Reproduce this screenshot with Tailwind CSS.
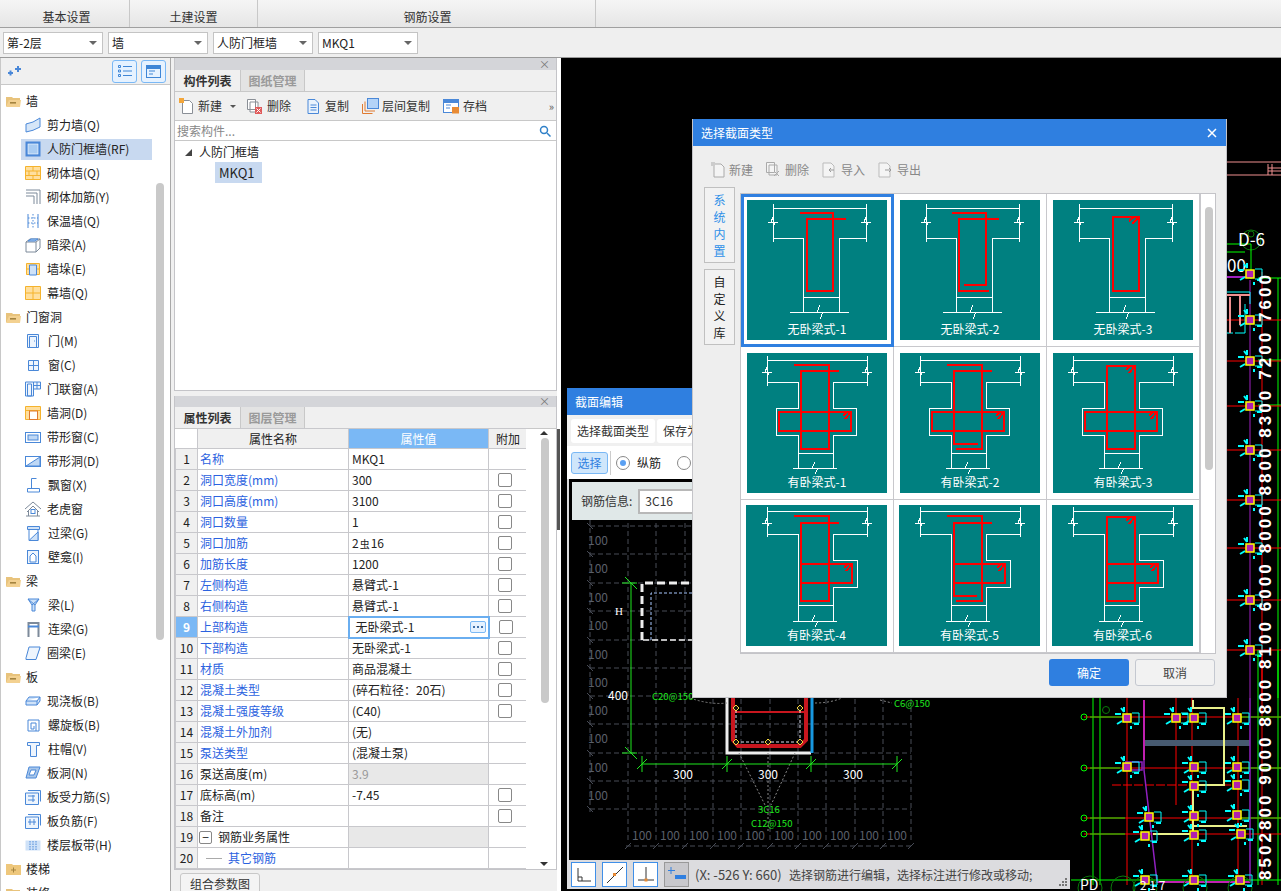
<!DOCTYPE html>
<html lang="zh-CN">
<head>
<meta charset="utf-8">
<title>截面编辑</title>
<script src="https://cdn.jsdelivr.net/npm/@tailwindcss/browser@4"></script>
</head>
<body class="w-[1281px] h-[891px] overflow-hidden bg-[#f0f0f0] text-[12px] leading-[16px] text-[#222] font-['Noto_Sans_CJK_SC',sans-serif]">

<svg width="0" height="0" class="absolute">
<defs>
<g id="ba"><path d="M26 4V42M119 4V42M26 8H119M26 38H56V112M119 38H92V112M56 97H92M43 112H102M21 22H31M26 17l-2 5h4l-2 5M114 22H124M119 17l-2 5h4l-2 5M73 105l-3 7h6l-3 7" fill="none" stroke="#fff"/></g>
<g id="a1"><use href="#ba"/><path d="M53 13H86V91H60V19H99" fill="none" stroke="#f00" stroke-width="2"/></g>
<g id="a2"><use href="#ba"/><path d="M52 13H86V85H64M99 19H59V91H89" fill="none" stroke="#f00" stroke-width="2"/></g>
<g id="a3"><use href="#ba"/><path d="M60 17H86V91H60ZM79 24l7-7M76 21l5-4" fill="none" stroke="#f00" stroke-width="2"/></g>
<g id="bb"><path d="M20 3V33M120 3V33M20 7H120M20 29H51V55H29V82H51V115M120 29H86V55H109V82H86V115M51 100H86M46 115H90M15 19H25M20 14l-2 5h4l-2 5M115 19H125M120 14l-2 5h4l-2 5M68 109l-3 6h6l-3 6" fill="none" stroke="#fff"/></g>
<g id="ring"><path d="M32 59H104V78H32ZM98 66l6-7M96 63l4-4" fill="none" stroke="#f00" stroke-width="2"/></g>
<g id="b1"><use href="#bb"/><use href="#ring"/><path d="M47 12H82V96H54V18H92" fill="none" stroke="#f00" stroke-width="2"/></g>
<g id="b2"><use href="#bb"/><use href="#ring"/><path d="M47 12H82V96H56M92 18H54V91H78" fill="none" stroke="#f00" stroke-width="2"/></g>
<g id="b3"><use href="#bb"/><use href="#ring"/><path d="M54 13H82V96H54ZM76 20l6-7M73 17l4-4" fill="none" stroke="#f00" stroke-width="2"/></g>
<g id="bc"><path d="M21 2V32M121 2V32M21 6H121M21 29H52V116M121 29H87V55H111V82H87V116M52 100H87M47 116H91M16 18H26M21 13l-2 5h4l-2 5M116 18H126M121 13l-2 5h4l-2 5M69 110l-3 6h6l-3 6" fill="none" stroke="#fff"/></g>
<g id="ring2"><path d="M55 59H106V78H55ZM100 66l6-7M98 63l4-4" fill="none" stroke="#f00" stroke-width="2"/></g>
<g id="c1"><use href="#bc"/><use href="#ring2"/><path d="M48 11H83V96H55V18H93" fill="none" stroke="#f00" stroke-width="2"/></g>
<g id="c2"><use href="#bc"/><use href="#ring2"/><path d="M48 11H83V96H57M93 18H55V91H78" fill="none" stroke="#f00" stroke-width="2"/></g>
<g id="c3"><use href="#bc"/><use href="#ring2"/><path d="M55 12H83V96H55ZM77 19l6-7M74 16l4-4" fill="none" stroke="#f00" stroke-width="2"/></g>
<g id="node"><path d="M-12-4h6M-6-10l3 4M-3-11v5M7 6h5M4 8v3M-10 6l5-3" stroke="#0ff" stroke-width="2" fill="none"/><rect x="-4" y="-4" width="8" height="8" fill="#b020b0" stroke="#ff0" stroke-width="1.500"/><path d="M5-5h7v10h-7" fill="none" stroke="#0ff"/></g>
<g id="fold"><path d="M0 2h6l1 1h7v2H4L1 11H0Z" fill="#e8c37c"/><path d="M3 5h12l-1 7H0Z" fill="#f3d191"/><rect x="4" y="7" width="6" height="1.600" fill="#a5843f"/></g>
</defs>
</svg>

<!-- top tabs -->
<div class="flex h-[28px] bg-gradient-to-b from-[#f5f5f5] to-[#e6e6e6] border-b border-[#a0a0a0]">
  <div class="w-[130px] pl-[4px] border-r border-[#c8c8c8] flex items-end justify-center pb-[2px] text-[#333]">基本设置</div>
  <div class="w-[128px] border-r border-[#c8c8c8] flex items-end justify-center pb-[2px] text-[#333]">土建设置</div>
  <div class="w-[338px] pl-[2px] border-r border-[#c8c8c8] flex items-end justify-center pb-[2px] text-[#333]">钢筋设置</div>
</div>

<!-- selector bar -->
<div class="flex h-[29px] items-center gap-[5px] pl-[3px] bg-[#efefef]">
  <div class="w-[100px] h-[22px] bg-white border border-[#c4c4c4] flex items-center justify-between pl-[3px] pr-[5px]"><span>第-2层</span><span class="w-0 h-0 border-x-[4px] border-x-transparent border-t-[4px] border-t-[#666]"></span></div>
  <div class="w-[100px] h-[22px] bg-white border border-[#c4c4c4] flex items-center justify-between pl-[3px] pr-[5px]"><span>墙</span><span class="w-0 h-0 border-x-[4px] border-x-transparent border-t-[4px] border-t-[#666]"></span></div>
  <div class="w-[100px] h-[22px] bg-white border border-[#c4c4c4] flex items-center justify-between pl-[3px] pr-[5px]"><span>人防门框墙</span><span class="w-0 h-0 border-x-[4px] border-x-transparent border-t-[4px] border-t-[#666]"></span></div>
  <div class="w-[100px] h-[22px] bg-white border border-[#c4c4c4] flex items-center justify-between pl-[3px] pr-[5px]"><span>MKQ1</span><span class="w-0 h-0 border-x-[4px] border-x-transparent border-t-[4px] border-t-[#666]"></span></div>
</div>

<div class="flex h-[834px] border-t border-[#9a9a9a]">

  <!-- left tree -->
  <div class="relative w-[171px] shrink-0 border-r border-[#a8a8a8] bg-white overflow-hidden border-l border-l-[#c8c8c8]">
    <div class="h-[27px] bg-[#f0f0f0] border-b border-[#c8c8c8] flex items-center pl-[6px]">
      <svg width="16" height="12" viewBox="0 0 16 12"><path d="M1 8h5M3.500 5.500v5M8 4h6M11 1v6" stroke="#4a88d8" stroke-width="2"/></svg>
      <div class="ml-auto flex gap-[4px] pr-[4px]">
        <div class="w-[25px] h-[23px] rounded-[3px] border border-[#7ab8f5] bg-[#e6f2ff] flex items-center justify-center"><svg width="16" height="14" viewBox="0 0 16 14" fill="none" stroke="#3f86d6"><path d="M1.500 1.500h2v2h-2zM1.500 6h2v2h-2zM1.500 10.500h2v2h-2zM6 2.500h9M6 7h9M6 11.500h9"/></svg></div>
        <div class="w-[25px] h-[23px] rounded-[3px] border border-[#7ab8f5] bg-[#e6f2ff] flex items-center justify-center"><svg width="17" height="15" viewBox="0 0 17 15" fill="none" stroke="#3f86d6"><rect x="1.500" y="1.500" width="14" height="12"/><rect x="1.500" y="1.500" width="14" height="3" fill="#3f86d6"/><path d="M4 7h6M4 10h4"/></svg></div>
      </div>
    </div>
    <div class="pt-[4px]">
      <div class="h-6 flex items-center pl-[5px] gap-[4px]"><svg width="16" height="13" viewBox="0 0 16 13"><use href="#fold"/></svg>墙</div>
      <div class="h-6 flex items-center pl-[24px] gap-[6px]"><svg width="16" height="16" viewBox="0 0 16 16" fill="#d6e6f8" stroke="#4a88d8"><path d="M1 7Q8 6 15 1V10Q8 14 1 15Z"/></svg>剪力墙(Q)</div>
      <div class="ml-[20px] w-[131px] h-[21px] my-[1.500px] pl-[4px] bg-[#c8d9f0] flex items-center gap-[6px]"><svg width="16" height="16" viewBox="0 0 16 16" fill="none"><rect x="0.500" y="0.500" width="15" height="15" fill="#4a88d8"/><rect x="3" y="3" width="10" height="10" fill="#a9ccf2" stroke="#fff" stroke-width=".6"/></svg>人防门框墙(RF)</div>
      <div class="h-6 flex items-center pl-[24px] gap-[6px]"><svg width="16" height="14" viewBox="0 0 16 14" fill="#ffdf9e" stroke="#f5b32d"><path d="M.500.500h15v13H.500zM.500 5h15M.500 9.500h15M8 .5V5M4 5v4.500M12 5v4.500M8 9.500v4"/></svg>砌体墙(Q)</div>
      <div class="h-6 flex items-center pl-[24px] gap-[6px]"><svg width="16" height="16" viewBox="0 0 16 16" fill="none" stroke="#7d8a9a"><path d="M1 1h14v14M1 4h11v11M1 7h8v8"/></svg>砌体加筋(Y)</div>
      <div class="h-6 flex items-center pl-[24px] gap-[6px]"><svg width="16" height="16" viewBox="0 0 16 16" fill="none" stroke="#4a88d8"><path d="M3 1v14M13 1v14" /><path d="M8 1v14M3 5h10M3 10h10" stroke-dasharray="1.500 1.500"/></svg>保温墙(Q)</div>
      <div class="h-6 flex items-center pl-[24px] gap-[6px]"><svg width="16" height="16" viewBox="0 0 16 16" fill="#fff" stroke="#7d8a9a"><path d="M1 5l4-3h10v9l-4 4H1zM1 5h10v10M11 5l4-3"/><path d="M3 4l3-2h7l-3 2z" fill="#a9ccf2" stroke="#4a88d8"/></svg>暗梁(A)</div>
      <div class="h-6 flex items-center pl-[24px] gap-[6px]"><svg width="16" height="14" viewBox="0 0 16 14" fill="#ffdf9e" stroke="#f5b32d"><path d="M1.500 1.500h13v11h-13zM1.500 7h13"/><path d="M4.500 3h7v10h-7z" fill="#cfe2f8" stroke="#4a88d8"/></svg>墙垛(E)</div>
      <div class="h-6 flex items-center pl-[24px] gap-[6px]"><svg width="16" height="14" viewBox="0 0 16 14" fill="#ffdf9e" stroke="#f5b32d"><path d="M.500.500h15v13H.500zM.500 7h15M8 .5v13"/></svg>幕墙(Q)</div>
      <div class="h-6 flex items-center pl-[5px] gap-[4px]"><svg width="16" height="13" viewBox="0 0 16 13"><use href="#fold"/></svg>门窗洞</div>
      <div class="h-6 flex items-center pl-[26px] gap-[8px]"><svg width="13" height="14" viewBox="0 0 13 14" fill="#eef5fd" stroke="#4a88d8"><path d="M.500.500h11v13H.500zM2.500 2.500h7v11h-7z"/><path d="M7 7h1"/></svg>门(M)</div>
      <div class="h-6 flex items-center pl-[26px] gap-[8px]"><svg width="13" height="13" viewBox="0 0 13 13" fill="#eef5fd" stroke="#4a88d8"><path d="M1.500 1.500h10v10h-10zM6.500 1.500v10M1.500 6.500h10"/></svg>窗(C)</div>
      <div class="h-6 flex items-center pl-[24px] gap-[6px]"><svg width="16" height="16" viewBox="0 0 16 16" fill="#eef5fd" stroke="#4a88d8"><path d="M.500 1h8v14h-8zM2.500 3h4v12h-4zM8.500 1h7v7h-7zM12 1v7M8.500 4.500h7"/></svg>门联窗(A)</div>
      <div class="h-6 flex items-center pl-[24px] gap-[6px]"><svg width="16" height="14" viewBox="0 0 16 14" fill="#ffdf9e" stroke="#f5b32d"><path d="M.500.500h15v13H.500zM.500 4.500h15"/><rect x="4.500" y="5" width="8" height="8.500" fill="#fff" stroke="#e07a30"/></svg>墙洞(D)</div>
      <div class="h-6 flex items-center pl-[24px] gap-[6px]"><svg width="16" height="11" viewBox="0 0 16 11" fill="#fff" stroke="#4a88d8"><rect x=".5" y=".5" width="15" height="10"/><rect x="3" y="3" width="10" height="5" fill="#bfd8f5"/></svg>带形窗(C)</div>
      <div class="h-6 flex items-center pl-[24px] gap-[6px]"><svg width="16" height="11" viewBox="0 0 16 11" fill="#fff" stroke="#4a88d8"><rect x=".5" y=".5" width="15" height="10"/><path d="M1 10L15 1v9z" fill="#bfd8f5"/></svg>带形洞(D)</div>
      <div class="h-6 flex items-center pl-[26px] gap-[8px]"><svg width="13" height="15" viewBox="0 0 13 15" fill="none" stroke="#4a88d8"><path d="M4.500.500V10M4.500.500h5M.500 10.500h12v3.500H.500z"/></svg>飘窗(X)</div>
      <div class="h-6 flex items-center pl-[24px] gap-[6px]"><svg width="16" height="16" viewBox="0 0 16 16" fill="none" stroke="#7d8a9a"><path d="M0 8l8-7 8 7M2 11l6-6 6 6M1 15h14M3.500 9v6M12.500 9v6"/><rect x="6" y="8.500" width="4" height="4" stroke="#4a88d8"/></svg>老虎窗</div>
      <div class="h-6 flex items-center pl-[26px] gap-[8px]"><svg width="13" height="15" viewBox="0 0 13 15" fill="#cfe2f8" stroke="#4a88d8"><path d="M.500.500h12v3H.500z"/><path d="M2 3.500v11h9V3.500" fill="none"/><path d="M2 14.500L11 6v8.500z"/></svg>过梁(G)</div>
      <div class="h-6 flex items-center pl-[26px] gap-[8px]"><svg width="13" height="14" viewBox="0 0 13 14" fill="#eef5fd" stroke="#4a88d8"><rect x=".5" y=".5" width="11" height="13"/><path d="M3 12V6l3-3 3 3v6z" fill="#fff"/></svg>壁龛(I)</div>
      <div class="h-6 flex items-center pl-[5px] gap-[4px]"><svg width="16" height="13" viewBox="0 0 16 13"><use href="#fold"/></svg>梁</div>
      <div class="h-6 flex items-center pl-[26px] gap-[8px]"><svg width="13" height="14" viewBox="0 0 13 14" fill="#cfe2f8" stroke="#4a88d8"><path d="M1 1h11L8 7v6H5V7z"/><path d="M1 1l7 6M12 1L5 7" fill="none"/></svg>梁(L)</div>
      <div class="h-6 flex items-center pl-[26px] gap-[8px]"><svg width="13" height="15" viewBox="0 0 13 15" fill="none" stroke="#7d8a9a" stroke-width="2"><path d="M1.500 15V1h10v14"/><path d="M1 4.500h11" stroke="#4a88d8"/></svg>连梁(G)</div>
      <div class="h-6 flex items-center pl-[24px] gap-[6px]"><svg width="16" height="14" viewBox="0 0 16 14" fill="#eef5fd" stroke="#4a88d8"><path d="M4 1h11l-4 11H1z"/><path d="M1 12v1.500h10l4-12"/></svg>圈梁(E)</div>
      <div class="h-6 flex items-center pl-[5px] gap-[4px]"><svg width="16" height="13" viewBox="0 0 16 13"><use href="#fold"/></svg>板</div>
      <div class="h-6 flex items-center pl-[24px] gap-[6px]"><svg width="16" height="10" viewBox="0 0 16 10" fill="#cfe2f8" stroke="#4a88d8"><path d="M4 1h11L12 5H1zM1 5v4h11l3-4V1M12 5v4"/></svg>现浇板(B)</div>
      <div class="h-6 flex items-center pl-[26px] gap-[8px]"><svg width="13" height="13" viewBox="0 0 13 13" fill="none" stroke="#4a88d8"><path d="M1 1h11v11H1zM9 12V4H4v6h3V7"/></svg>螺旋板(B)</div>
      <div class="h-6 flex items-center pl-[26px] gap-[8px]"><svg width="13" height="15" viewBox="0 0 13 15" fill="#eef5fd" stroke="#4a88d8"><path d="M.500.500h12v3H9.500v11h-6v-11H.500z"/></svg>柱帽(V)</div>
      <div class="h-6 flex items-center pl-[24px] gap-[6px]"><svg width="16" height="14" viewBox="0 0 16 14" fill="#a8c6ea" stroke="#4a88d8"><path d="M4 1h11l-4 11H1z"/><path d="M6 4h5L9 9H4z" fill="#fff"/></svg>板洞(N)</div>
      <div class="h-6 flex items-center pl-[24px] gap-[6px]"><svg width="16" height="15" viewBox="0 0 16 15" fill="#eef5fd" stroke="#4a88d8"><path d="M3 .5h12.500v11M.500 3h13v11.500H.500zM3 6h7M3 10h7M8 5v7"/></svg>板受力筋(S)</div>
      <div class="h-6 flex items-center pl-[24px] gap-[6px]"><svg width="16" height="15" viewBox="0 0 16 15" fill="#eef5fd" stroke="#4a88d8"><path d="M3 .5h12.500v11M.500 3h13v11.500H.500zM3 8h8M5 5v6M9 5v6"/></svg>板负筋(F)</div>
      <div class="h-6 flex items-center pl-[24px] gap-[6px]"><svg width="16" height="11" viewBox="0 0 16 11" fill="#cfe2f8" stroke="#4a88d8"><rect x=".5" y=".5" width="15" height="10" stroke="none"/><path d="M5 1v9M11 1v9M8 1v9" stroke-dasharray="1.500 1"/></svg>楼层板带(H)</div>
      <div class="h-6 flex items-center pl-[5px] gap-[4px]"><svg width="16" height="13" viewBox="0 0 16 13"><path d="M0 1h6l1 1h8v10H0z" fill="#eec77c"/><path d="M5 7h5M7.500 4.500v5" stroke="#a5843f"/></svg>楼梯</div>
      <div class="h-6 flex items-center pl-[5px] gap-[4px]"><svg width="16" height="13" viewBox="0 0 16 13"><use href="#fold"/></svg>装修</div>
    </div>
    <div class="absolute left-[155px] top-[125px] w-[8px] h-[457px] rounded-[4px] bg-[#c9c9c9]"></div>
  </div>

  <!-- middle panels -->
  <div class="w-[386px] shrink-0 pl-[3px] flex flex-col bg-[#f0f0f0]">
    <div class="h-[333px] border-x border-b border-[#c4c4c8] flex flex-col">
      <div class="h-[12px] bg-[#d4d5d9] flex items-center justify-end pr-[6px] text-[11px] leading-none text-[#777]">×</div>
      <div class="h-[22px] flex border-b border-[#c8c8c8]">
        <div class="w-[65px] flex items-center justify-center font-bold text-[#333]">构件列表</div>
        <div class="w-[65px] bg-[#e3e3e3] border-x border-[#c8c8c8] flex items-center justify-center font-bold text-[#9a9a9a]">图纸管理</div>
      </div>
      <div class="h-[29px] border-b border-[#c8c8c8] flex items-center pl-[4px] text-[#333] relative">
        <svg width="15" height="16" viewBox="0 0 15 16" fill="#fff" stroke="#8a8f96"><path d="M3.500 2.500h7l3 3v10h-10z"/><path d="M0 0h5v5H0z" fill="#f3a63a" stroke="none"/></svg>
        <span class="ml-[4px]">新建</span>
        <span class="ml-[8px] w-0 h-0 border-x-[3px] border-x-transparent border-t-[3px] border-t-[#555]"></span>
        <svg class="ml-[11px]" width="15" height="15" viewBox="0 0 15 15" fill="#fff" stroke="#8a8f96"><path d="M.500.500h8v10h-8zM3 3h8v10H3z"/><rect x="8" y="8" width="7" height="7" fill="#e05a5a" stroke="none"/><path d="M9.500 9.500l4 4M13.500 9.500l-4 4" stroke="#fff"/></svg>
        <span class="ml-[5px]">删除</span>
        <svg class="ml-[15px]" width="13" height="15" viewBox="0 0 13 15" fill="#e9f2fc" stroke="#4a88d8"><path d="M2 .5h7l3.500 3.500v10.500H2zM4.500 6h6M4.500 8.500h6M4.500 11h6"/></svg>
        <span class="ml-[6px]">复制</span>
        <svg class="ml-[13px]" width="17" height="16" viewBox="0 0 17 16" fill="none"><path d="M.500 6v9.500h10M3 3.500v9.500h10" stroke="#e07a30"/><rect x="5.500" y=".5" width="11" height="10" fill="#b4d3f7" stroke="#4a88d8"/></svg>
        <span class="ml-[3px]">层间复制</span>
        <svg class="ml-[13px]" width="17" height="15" viewBox="0 0 17 15" fill="#fff" stroke="#4a88d8"><rect x=".5" y=".5" width="15" height="13"/><rect x=".5" y=".5" width="15" height="3" fill="#4a88d8"/><path d="M3 6h5M3 9h4"/><rect x="9" y="8" width="7" height="6.500" fill="#e88b35" stroke="none"/></svg>
        <span class="ml-[3px]">存档</span>
        <span class="absolute right-[2px] text-[11px] text-[#555]">»</span>
      </div>
      <div class="h-[20px] bg-white border-b border-[#c8c8c8] flex items-center pl-[2px] pr-[5px] justify-between text-[#888]"><span>搜索构件...</span><svg width="12" height="12" viewBox="0 0 12 12" fill="none" stroke="#2f80c8" stroke-width="1.500"><circle cx="5" cy="5" r="3.500"/><path d="M8 8l3.500 3.500"/></svg></div>
      <div class="flex-1 bg-white pt-[1px]">
        <div class="h-[20px] flex items-center pl-[10px] gap-[7px] text-[#222]"><svg width="7" height="7" viewBox="0 0 7 7"><path d="M7 0v7H0z" fill="#444"/></svg>人防门框墙</div>
        <div class="ml-[40px] w-[47px] h-[21px] bg-[#c8d9f0] flex items-center pl-[4px] text-[13px]">MKQ1</div>
      </div>
    </div>

    <div class="h-[5px]"></div>

    <div class="relative flex-1 flex flex-col min-h-0">
      <div class="border-x border-[#c4c4c8] flex flex-col">
        <div class="h-[11px] bg-[#d4d5d9] flex items-center justify-end pr-[6px] text-[11px] leading-none text-[#777]">×</div>
        <div class="h-[22px] flex border-b border-[#c8c8c8]">
          <div class="w-[65px] flex items-center justify-center font-bold text-[#333]">属性列表</div>
          <div class="w-[65px] bg-[#e3e3e3] border-x border-[#c8c8c8] flex items-center justify-center font-bold text-[#9a9a9a]">图层管理</div>
        </div>
        <div class="relative bg-white border-b border-[#c4c4c8]">
          <table class="table-fixed border-collapse w-[352px] text-[12px] -mt-px">
            <colgroup><col class="w-[22px]"><col class="w-[151px]"><col class="w-[140px]"><col class="w-[39px]"></colgroup>
            <tbody class="[&_td]:border [&_td]:border-[#c8c8cc] [&_td]:h-[21px] [&_td]:py-0 [&_td]:leading-[16px]">
              <tr class="h-[20px]"><td class="!border-0 bg-white !h-[20px]"></td><td class="bg-[#f0f0f0] text-center !h-[20px]">属性名称</td><td class="bg-[#7ab8f5] text-white text-center !h-[20px]">属性值</td><td class="bg-[#f0f0f0] text-center !h-[20px]">附加</td></tr>
              <tr><td class="bg-[#f0f0f0] text-center">1</td><td class="pl-[2px] text-[#2b62e0]">名称</td><td class="pl-[3px]">MKQ1</td><td></td></tr>
              <tr><td class="bg-[#f0f0f0] text-center">2</td><td class="pl-[2px] text-[#2b62e0]">洞口宽度(mm)</td><td class="pl-[3px]">300</td><td><div class="ml-[9px] w-[14px] h-[14px] rounded-[2px] border border-[#888]"></div></td></tr>
              <tr><td class="bg-[#f0f0f0] text-center">3</td><td class="pl-[2px] text-[#2b62e0]">洞口高度(mm)</td><td class="pl-[3px]">3100</td><td><div class="ml-[9px] w-[14px] h-[14px] rounded-[2px] border border-[#888]"></div></td></tr>
              <tr><td class="bg-[#f0f0f0] text-center">4</td><td class="pl-[2px] text-[#2b62e0]">洞口数量</td><td class="pl-[3px]">1</td><td><div class="ml-[9px] w-[14px] h-[14px] rounded-[2px] border border-[#888]"></div></td></tr>
              <tr><td class="bg-[#f0f0f0] text-center">5</td><td class="pl-[2px] text-[#2b62e0]">洞口加筋</td><td class="pl-[3px]">2<span class="text-[10px] px-[1px]">⾍</span>16</td><td><div class="ml-[9px] w-[14px] h-[14px] rounded-[2px] border border-[#888]"></div></td></tr>
              <tr><td class="bg-[#f0f0f0] text-center">6</td><td class="pl-[2px] text-[#2b62e0]">加筋长度</td><td class="pl-[3px]">1200</td><td><div class="ml-[9px] w-[14px] h-[14px] rounded-[2px] border border-[#888]"></div></td></tr>
              <tr><td class="bg-[#f0f0f0] text-center">7</td><td class="pl-[2px] text-[#2b62e0]">左侧构造</td><td class="pl-[3px]">悬臂式-1</td><td><div class="ml-[9px] w-[14px] h-[14px] rounded-[2px] border border-[#888]"></div></td></tr>
              <tr><td class="bg-[#f0f0f0] text-center">8</td><td class="pl-[2px] text-[#2b62e0]">右侧构造</td><td class="pl-[3px]">悬臂式-1</td><td><div class="ml-[9px] w-[14px] h-[14px] rounded-[2px] border border-[#888]"></div></td></tr>
              <tr><td class="bg-[#7ab8f5] text-center text-white font-bold">9</td><td class="pl-[2px] text-[#2b62e0]">上部构造</td><td class="!border-2 !border-[#6aaef0] pl-[6px]"><div class="flex items-center justify-between pr-[2px]"><span>无卧梁式-1</span><span class="w-[16px] h-[12px] rounded-[2px] border border-[#7ab8f5] bg-[#e6f2ff] flex items-center justify-center"><svg width="10" height="2" viewBox="0 0 10 2" fill="#3f6fa8"><path d="M0 0h2v2H0zM4 0h2v2H4zM8 0h2v2H8z"/></svg></span></div></td><td><div class="ml-[9px] w-[14px] h-[14px] rounded-[2px] border border-[#888]"></div></td></tr>
              <tr><td class="bg-[#f0f0f0] text-center">10</td><td class="pl-[2px] text-[#2b62e0]">下部构造</td><td class="pl-[3px]">无卧梁式-1</td><td><div class="ml-[9px] w-[14px] h-[14px] rounded-[2px] border border-[#888]"></div></td></tr>
              <tr><td class="bg-[#f0f0f0] text-center">11</td><td class="pl-[2px] text-[#2b62e0]">材质</td><td class="pl-[3px]">商品混凝土</td><td><div class="ml-[9px] w-[14px] h-[14px] rounded-[2px] border border-[#888]"></div></td></tr>
              <tr><td class="bg-[#f0f0f0] text-center">12</td><td class="pl-[2px] text-[#2b62e0]">混凝土类型</td><td class="pl-[3px]">(碎石粒径：20石)</td><td><div class="ml-[9px] w-[14px] h-[14px] rounded-[2px] border border-[#888]"></div></td></tr>
              <tr><td class="bg-[#f0f0f0] text-center">13</td><td class="pl-[2px] text-[#2b62e0]">混凝土强度等级</td><td class="pl-[3px]">(C40)</td><td><div class="ml-[9px] w-[14px] h-[14px] rounded-[2px] border border-[#888]"></div></td></tr>
              <tr><td class="bg-[#f0f0f0] text-center">14</td><td class="pl-[2px] text-[#2b62e0]">混凝土外加剂</td><td class="pl-[3px]">(无)</td><td></td></tr>
              <tr><td class="bg-[#f0f0f0] text-center">15</td><td class="pl-[2px] text-[#2b62e0]">泵送类型</td><td class="pl-[3px]">(混凝土泵)</td><td></td></tr>
              <tr><td class="bg-[#f0f0f0] text-center">16</td><td class="pl-[2px]">泵送高度(m)</td><td class="pl-[3px] bg-[#e8e8e8] text-[#999]">3.9</td><td></td></tr>
              <tr><td class="bg-[#f0f0f0] text-center">17</td><td class="pl-[2px]">底标高(m)</td><td class="pl-[3px]">-7.45</td><td><div class="ml-[9px] w-[14px] h-[14px] rounded-[2px] border border-[#888]"></div></td></tr>
              <tr><td class="bg-[#f0f0f0] text-center">18</td><td class="pl-[2px]">备注</td><td class="pl-[3px]"></td><td><div class="ml-[9px] w-[14px] h-[14px] rounded-[2px] border border-[#888]"></div></td></tr>
              <tr><td class="bg-[#f0f0f0] text-center">19</td><td class="pl-[1px]"><div class="flex items-center gap-[6px]"><span class="w-[13px] h-[13px] rounded-[2px] border border-[#888] flex items-center justify-center text-[12px] leading-none">−</span>钢筋业务属性</div></td><td class="bg-[#e8e8e8]"></td><td></td></tr>
              <tr><td class="bg-[#f0f0f0] text-center">20</td><td class="pl-[8px] text-[#2b62e0]"><div class="flex items-center gap-[6px]"><span class="w-[16px] h-px bg-[#aaa]"></span>其它钢筋</div></td><td></td><td></td></tr>
            </tbody>
          </table>
          <div class="absolute right-0 top-0 bottom-0 w-[30px] bg-white">
            <div class="absolute left-[14px] top-[2px] w-0 h-0 border-x-[4px] border-x-transparent border-b-[4px] border-b-[#333]"></div>
            <div class="absolute left-[15px] top-[9px] w-[8px] h-[265px] rounded-[4px] bg-[#c9c9c9]"></div>
            <div class="absolute left-[14px] bottom-[3px] w-0 h-0 border-x-[4px] border-x-transparent border-t-[4px] border-t-[#333]"></div>
          </div>
        </div>
      </div>
      <div class="mt-[3px] ml-[6px] w-[80px] h-[22px] bg-[#f4f4f4] border border-[#c8c8c8] rounded-t-[3px] text-center text-[#333] leading-[20px]">组合参数图</div>
    </div>
  </div>

  <!-- splitter + canvas -->
  <div class="relative w-[4px] shrink-0 bg-white"><div class="absolute left-0 top-[371px] w-[3px] h-[101px] bg-[#555]"></div></div>
  <div class="relative flex-1 bg-black overflow-hidden">

    <svg class="absolute inset-0" width="720" height="833" viewBox="561 58 720 833">
      <!-- upper right strip -->
      <g fill="none">
        <path d="M1227 162H1281M1227 175H1281M1268 164V175M1272 164V175M1268 168H1281M1268 171H1281" stroke="#f09090"/>
        <circle cx="1251" cy="240" r="10" stroke="#0a7a0a"/><circle cx="1251" cy="234" r="3" stroke="#0a7a0a"/>
        <path d="M1227 244H1251V279M1227 252H1245" stroke="#0f0"/>
        <path d="M1227 277H1250" stroke="#a020c0" stroke-width="2"/>
        <path d="M1250 280V698" stroke="#a020c0"/>
        <path d="M1262 272V698" stroke="#f00"/>
        <path d="M1278 278V698M1258 278H1281M1258 360H1281M1258 405H1281" stroke="#0f0"/>
        <path d="M1227 320H1281M1227 361H1281M1227 406H1281M1227 450H1281M1227 500H1281M1227 548H1281M1227 600H1281M1227 650H1281" stroke="#f00"/>
        <path d="M1227 292H1250V304M1245 304V333H1235M1227 333H1233" stroke="#0ff"/>
        <path d="M1227 295H1250M1230 297V333M1240 295V325" stroke="#f09090" stroke-width="2"/>
      </g>
      <text x="1238" y="246" fill="#fff" font-size="17">D-6</text>
      <text x="1227" y="272" fill="#fff" font-size="17">00</text>
      <use href="#node" x="1250" y="274"/>
      <use href="#node" x="1250" y="320"/>
      <use href="#node" x="1250" y="361"/>
      <use href="#node" x="1250" y="406"/>
      <use href="#node" x="1250" y="450"/>
      <use href="#node" x="1250" y="500"/>
      <use href="#node" x="1250" y="548"/>
      <use href="#node" x="1250" y="600"/>
      <use href="#node" x="1250" y="650"/>

      <!-- lower plan -->
      <g fill="none">
        <path d="M1093 698V885M1100 698V885M1278 650V885M1258 650V885" stroke="#0f0"/>
        <path d="M1127 698V885M1176 698V805M1192 698V885M1238 698V885M1262 650V885" stroke="#f00"/>
        <path d="M1084 717H1281M1084 768H1281M1084 818H1281M1084 834H1281" stroke="#f00"/>
        <path d="M1090 717H1125M1090 768H1120M1090 818H1125M1090 834H1125M1240 717H1281M1240 768H1281M1240 818H1281" stroke="#0f0"/>
        <path d="M1112 785H1240" stroke="#f00" stroke-dasharray="9 2"/>
        <rect x="1145" y="740" width="105" height="6" fill="#475a70"/>
        <path d="M1193 700V708H1224V785H1193V834H1153M1193 826H1247" stroke="#e8f08a" stroke-width="2"/>
        <path d="M1144 700V770L1157 882H1250M1250 698V882M1125 762H1142V770H1125" stroke="#9020c0" stroke-width="1.500"/>
        <path d="M1144 700V760" stroke="#c020b0" stroke-width="2"/>
        <path d="M1157 882H1250" stroke="#c020b0" stroke-width="2"/>
        <path d="M1071 880H1281" stroke="#0f0"/>
        <circle cx="1084" cy="717" r="3" stroke="#0f0"/><circle cx="1084" cy="768" r="3" stroke="#0f0"/><circle cx="1084" cy="818" r="3" stroke="#0f0"/><circle cx="1084" cy="834" r="3" stroke="#0f0"/>
        <circle cx="1106" cy="710" r="3.500" stroke="#0a7a0a"/>
        <circle cx="1090" cy="888" r="12" stroke="#0a7a0a"/><circle cx="1123" cy="888" r="12" stroke="#0a7a0a"/><circle cx="1145" cy="888" r="12" stroke="#0a7a0a"/><circle cx="1195" cy="888" r="12" stroke="#0a7a0a"/><circle cx="1240" cy="888" r="12" stroke="#0a7a0a"/>
      </g>
      <use href="#node" x="1127" y="718"/>
      <use href="#node" x="1176" y="718"/>
      <use href="#node" x="1194" y="718"/>
      <use href="#node" x="1237" y="718"/>
      <use href="#node" x="1127" y="767"/>
      <use href="#node" x="1194" y="767"/>
      <use href="#node" x="1237" y="767"/>
      <use href="#node" x="1194" y="786"/>
      <use href="#node" x="1237" y="785"/>
      <use href="#node" x="1149" y="817"/>
      <use href="#node" x="1194" y="816"/>
      <use href="#node" x="1237" y="815"/>
      <use href="#node" x="1145" y="836"/>
      <use href="#node" x="1194" y="835"/>
      <use href="#node" x="1241" y="834"/>
      <use href="#node" x="1145" y="880"/>
      <use href="#node" x="1194" y="880"/>
      <use href="#node" x="1240" y="880"/>
      <text x="1080" y="890" fill="#fff" font-size="14">PD</text>
      <text x="1140" y="890" fill="#fff" font-size="12">2 1 7</text>
      <text x="0" y="0" transform="translate(1271 880) rotate(-90)" fill="#fff" font-size="17" font-weight="bold" font-family="Liberation Sans" textLength="605">8502800 9000 8800 8100 6000 8000 8800 8300 7200 7600</text>
    </svg>

    <!-- section editor window -->
    <div class="absolute left-[6px] top-[330px] w-[503px] h-[501px] bg-[#dcdcdf] flex flex-col overflow-hidden">
      <div class="h-[27px] bg-[#2f7fe0] text-white flex items-center pl-[8px] shrink-0">截面编辑</div>
      <div class="h-[31px] bg-[#f0f0f0] flex items-center pl-[4px] gap-[2px] shrink-0">
        <div class="h-[24px] px-[6px] bg-white rounded-[3px] flex items-center text-[#333]">选择截面类型</div>
        <div class="h-[24px] px-[6px] bg-white rounded-[3px] flex items-center text-[#333]">保存为模板</div>
      </div>
      <div class="h-[33px] bg-white flex items-center pl-[4px] shrink-0">
        <div class="w-[37px] h-[22px] rounded-[3px] bg-[#cfe6fb] border border-[#7ab8f5] text-[#2f7fe0] text-center leading-[20px]">选择</div>
        <div class="ml-[2px] w-px h-[24px] bg-[#ccc]"></div>
        <div class="ml-[5px] w-[14px] h-[14px] rounded-full border border-[#888] flex items-center justify-center"><div class="w-[6px] h-[6px] rounded-full bg-[#5aa0f2]"></div></div>
        <span class="ml-[7px]">纵筋</span>
        <div class="ml-[16px] w-[14px] h-[14px] rounded-full border border-[#888]"></div>
      </div>
      <div class="relative flex-1 ml-[2px] bg-black overflow-hidden">
        <svg class="absolute inset-0" width="501" height="381" viewBox="569 479 501 381">
          <path d="M628 515V840M656 515V840M685 515V840M713 515V840M741 515V840M770 515V840M798 515V840M826 515V840M855 515V840M883 515V840M911 515V840M590 526H911M590 554H911M590 583H911M590 611H911M590 640H911M590 668H911M590 696H911M590 724H911M590 753H911M590 781H911M590 809H911M590 520V812M626 846H912" stroke="#484c57" stroke-dasharray="5 3" fill="none"/>
          <path d="M587 523l6 6M587 551l6 6M587 580l6 6M587 608l6 6M587 637l6 6M587 665l6 6M587 693l6 6M587 721l6 6M587 750l6 6M587 778l6 6M587 806l6 6M625 849l6-6M653 849l6-6M682 849l6-6M710 849l6-6M738 849l6-6M767 849l6-6M795 849l6-6M823 849l6-6M852 849l6-6M880 849l6-6M908 849l6-6" stroke="#484c57" fill="none"/>
          <g fill="#5a5f6a" font-size="12">
            <text x="588" y="545">100</text><text x="588" y="573">100</text><text x="588" y="602">100</text><text x="588" y="630">100</text><text x="588" y="659">100</text><text x="588" y="687">100</text><text x="588" y="715">100</text><text x="588" y="743">100</text><text x="588" y="772">100</text><text x="588" y="800">100</text>
            <text x="632" y="840">100</text><text x="660" y="840">100</text><text x="689" y="840">100</text><text x="717" y="840">100</text><text x="745" y="840">100</text><text x="774" y="840">100</text><text x="802" y="840">100</text><text x="830" y="840">100</text><text x="859" y="840">100</text><text x="887" y="840">100</text>
          </g>
          <!-- beam outline -->
          <path d="M642 640V583H700" stroke="#eee" stroke-width="3" stroke-dasharray="8 4" fill="none"/>
          <path d="M651 640V593H700" stroke="#a8c8ff" stroke-dasharray="3 2" fill="none"/>
          <path d="M643 640H700" stroke="#eee" stroke-width="1.500" stroke-dasharray="6 3" fill="none"/>
          <path d="M727 680V753H811" stroke="#eee" stroke-width="3" fill="none"/>
          <path d="M812 680V753" stroke="#1898e0" stroke-width="3" fill="none"/>
          <path d="M733 690V740L738 746H800L806 740V690" stroke="#c8161e" stroke-width="4" fill="none"/>
          <path d="M733 712H806M733 697l6-5M806 697l-6-5" stroke="#c8161e" stroke-width="2" fill="none"/>
          <path d="M736 705V742M736 742H800M800 705V742" stroke="#dde" stroke-dasharray="3 2" fill="none"/>
          <g fill="#111" stroke="#f5d840"><path d="M736 705l3 3-3 3-3-3zM800 705l3 3-3 3-3-3zM736 739l3 3-3 3-3-3zM768 739l3 3-3 3-3-3zM800 739l3 3-3 3-3-3z"/></g>
          <path d="M739 753L765 805M795 753L771 805M768 753V832M690 698Q710 705 727 703M815 703Q830 703 842 698M880 700L892 703" stroke="#888" stroke-dasharray="2 2" fill="none"/>
          <!-- dimensions -->
          <path d="M631 583V753M622 583H637M622 753H637M625 577l12 12M625 747l12 12M642 764H897M642 756V772M727 756V772M811 756V772M897 756V772M637 769l10-10M722 769l10-10M806 769l10-10M892 769l10-10" stroke="#1fe81f" fill="none"/>
          <text x="608" y="700" fill="#fff" font-size="12">400</text>
          <text x="615" y="615" fill="#fff" font-size="11" font-family="Liberation Serif">H</text>
          <text x="673" y="779" fill="#fff" font-size="12">300</text>
          <text x="758" y="779" fill="#fff" font-size="12">300</text>
          <text x="843" y="779" fill="#fff" font-size="12">300</text>
          <g fill="#1fe81f" font-size="9.500">
            <text x="652" y="700">C20@150</text>
            <text x="894" y="707">C6@150</text>
            <text x="758" y="813">3C16</text>
            <text x="751" y="827">C12@150</text>
          </g>
        </svg>
        <div class="absolute left-[3px] top-[3px] w-[498px] h-[38px] bg-[#e0e8e8] flex items-center pl-[9px]">
          <span class="text-[#333]">钢筋信息:</span>
          <div class="ml-[6px] w-[160px] h-[25px] bg-white border-2 border-[#b8b8b8] pl-[5px] leading-[20px] text-[#333]">3C16</div>
        </div>
      </div>
      <div class="relative h-[29px] bg-[#dcdcdf] flex items-center pl-[4px] gap-[6px] shrink-0">
        <div class="w-[25px] h-[25px] bg-white border border-[#3f8fe8] flex items-center justify-center"><svg width="16" height="16" viewBox="0 0 16 16" fill="none" stroke="#333"><path d="M2 1V14H15M2 10H6V14" /></svg></div>
        <div class="w-[25px] h-[25px] bg-white border border-[#3f8fe8] flex items-center justify-center"><svg width="18" height="18" viewBox="0 0 18 18" fill="none"><path d="M1 17L17 1" stroke="#333"/><rect x="7" y="7" width="3" height="3" fill="#e88b35"/></svg></div>
        <div class="w-[25px] h-[25px] bg-white border border-[#3f8fe8] flex items-center justify-center"><svg width="18" height="18" viewBox="0 0 18 18" fill="none"><path d="M9 1V14M1 14H17" stroke="#333"/><rect x="7.500" y="12.500" width="3" height="3" fill="#e88b35"/></svg></div>
        <div class="w-[25px] h-[25px] bg-[#c8c8cc] border border-[#999] flex items-center justify-center"><svg width="18" height="18" viewBox="0 0 18 18" fill="none"><path d="M3 1V8M0 4.500H7" stroke="#2f7fe0"/><rect x="7" y="9" width="11" height="4" fill="#2f7fe0"/></svg></div>
        <span class="w-[88px] text-[13px] text-[#444] whitespace-nowrap">(X: -526 Y: 660)</span>
        <span class="text-[#444] whitespace-nowrap">选择钢筋进行编辑，选择标注进行修改或移动;</span>
        <svg class="absolute right-[2px] bottom-[2px]" width="9" height="9" viewBox="0 0 9 9" fill="#777"><path d="M6 0h2v2H6zM3 3h2v2H3zM6 3h2v2H6zM0 6h2v2H0zM3 6h2v2H3zM6 6h2v2H6z"/></svg>
      </div>
    </div>

    <!-- section type dialog -->
    <div class="absolute left-[131px] top-[61px] w-[535px] h-[579px] bg-[#eeeeee] border-x border-b border-[#c4c4c8] flex flex-col">
      <div class="h-[27px] bg-[#2f7fe0] text-white flex items-center justify-between pl-[8px] pr-[9px] shrink-0"><span>选择截面类型</span><svg width="10" height="10" viewBox="0 0 10 10" stroke="#fff" stroke-width="1.500"><path d="M1 1l8 8M9 1l-8 8"/></svg></div>
      <div class="h-[41px] flex items-center pl-[18px] pt-[6px] text-[#888] shrink-0">
        <svg width="14" height="16" viewBox="0 0 14 16" fill="#f4f4f4" stroke="#aaa"><path d="M3 2h7l3 3v10H3z"/><path d="M0 0h4v4H0z" fill="#ccc" stroke="none"/></svg><span class="ml-[4px]">新建</span>
        <svg class="ml-[13px]" width="14" height="15" viewBox="0 0 14 15" fill="#f4f4f4" stroke="#aaa"><path d="M.500.500h8v10h-8zM3 3h8v10H3zM8 9l5 5M13 9l-5 5"/></svg><span class="ml-[5px]">删除</span>
        <svg class="ml-[13px]" width="14" height="16" viewBox="0 0 14 16" fill="#f4f4f4" stroke="#bbb"><path d="M1 1h8l3 3v11H1z"/><path d="M12 8H7M9 6L7 8l2 2" stroke="#999"/></svg><span class="ml-[5px]">导入</span>
        <svg class="ml-[13px]" width="14" height="16" viewBox="0 0 14 16" fill="#f4f4f4" stroke="#bbb"><path d="M1 1h8l3 3v11H1z"/><path d="M7 8h6M11 6l2 2-2 2" stroke="#999"/></svg><span class="ml-[5px]">导出</span>
      </div>
      <div class="flex pl-[11px] shrink-0">
        <div class="w-[31px] mr-[5px] flex flex-col gap-[6px]">
          <div class="h-[76px] border border-[#c0c0c0] bg-[#f2f2f2] flex flex-col items-center justify-center text-[#2f90e8] leading-[17px]"><span>系</span><span>统</span><span>内</span><span>置</span></div>
          <div class="h-[76px] border border-[#c0c0c0] bg-[#f2f2f2] flex flex-col items-center justify-center text-[#222] leading-[17px]"><span>自</span><span>定</span><span>义</span><span>库</span></div>
        </div>
        <div class="mt-[6px] h-[461px] w-[476px] bg-white border border-[#c4c4c8] flex overflow-hidden">
          <div class="w-[459px] grid grid-cols-[153px_153px_153px] auto-rows-[153px] text-white text-[12px] leading-[16px]">
            <div class="border-[3px] border-[#2f7fe0] pl-[3px] pt-[3px]"><div class="relative w-[140px] h-[140px] bg-[#008080]"><svg width="140" height="140" viewBox="0 0 140 140" shape-rendering="crispEdges"><use href="#a1"/></svg><span class="absolute left-0 right-0 top-[121px] text-center">无卧梁式-1</span></div></div>
            <div class="border-r border-b border-[#c8c8cc] pl-[6px] pt-[6px]"><div class="relative w-[140px] h-[140px] bg-[#008080]"><svg width="140" height="140" viewBox="0 0 140 140" shape-rendering="crispEdges"><use href="#a2"/></svg><span class="absolute left-0 right-0 top-[121px] text-center">无卧梁式-2</span></div></div>
            <div class="border-r border-b border-[#c8c8cc] pl-[6px] pt-[6px]"><div class="relative w-[140px] h-[140px] bg-[#008080]"><svg width="140" height="140" viewBox="0 0 140 140" shape-rendering="crispEdges"><use href="#a3"/></svg><span class="absolute left-0 right-0 top-[121px] text-center">无卧梁式-3</span></div></div>
            <div class="border-r border-b border-[#c8c8cc] pl-[6px] pt-[6px]"><div class="relative w-[140px] h-[140px] bg-[#008080]"><svg width="140" height="140" viewBox="0 0 140 140" shape-rendering="crispEdges"><use href="#b1"/></svg><span class="absolute left-0 right-0 top-[121px] text-center">有卧梁式-1</span></div></div>
            <div class="border-r border-b border-[#c8c8cc] pl-[6px] pt-[6px]"><div class="relative w-[140px] h-[140px] bg-[#008080]"><svg width="140" height="140" viewBox="0 0 140 140" shape-rendering="crispEdges"><use href="#b2"/></svg><span class="absolute left-0 right-0 top-[121px] text-center">有卧梁式-2</span></div></div>
            <div class="border-r border-b border-[#c8c8cc] pl-[6px] pt-[6px]"><div class="relative w-[140px] h-[140px] bg-[#008080]"><svg width="140" height="140" viewBox="0 0 140 140" shape-rendering="crispEdges"><use href="#b3"/></svg><span class="absolute left-0 right-0 top-[121px] text-center">有卧梁式-3</span></div></div>
            <div class="border-r border-b border-[#c8c8cc] pl-[5px] pt-[5px]"><div class="relative w-[141px] h-[141px] bg-[#008080]"><svg width="141" height="141" viewBox="0 0 141 141" shape-rendering="crispEdges"><use href="#c1"/></svg><span class="absolute left-0 right-0 top-[122px] text-center">有卧梁式-4</span></div></div>
            <div class="border-r border-b border-[#c8c8cc] pl-[5px] pt-[5px]"><div class="relative w-[141px] h-[141px] bg-[#008080]"><svg width="141" height="141" viewBox="0 0 141 141" shape-rendering="crispEdges"><use href="#c2"/></svg><span class="absolute left-0 right-0 top-[122px] text-center">有卧梁式-5</span></div></div>
            <div class="border-r border-b border-[#c8c8cc] pl-[5px] pt-[5px]"><div class="relative w-[141px] h-[141px] bg-[#008080]"><svg width="141" height="141" viewBox="0 0 141 141" shape-rendering="crispEdges"><use href="#c3"/></svg><span class="absolute left-0 right-0 top-[122px] text-center">有卧梁式-6</span></div></div>
          </div>
          <div class="flex-1 border-l border-[#c8c8cc] pl-[4px] pt-[13px]"><div class="w-[8px] h-[263px] rounded-[4px] bg-[#c9c9c9]"></div></div>
        </div>
      </div>
      <div class="flex justify-end gap-[6px] pr-[11px] pt-[5px]">
        <div class="w-[80px] h-[27px] rounded-[3px] bg-[#2f7fe0] text-white text-center leading-[27px]">确定</div>
        <div class="w-[80px] h-[27px] rounded-[3px] bg-[#f2f2f2] border border-[#c4c8d0] text-[#444] text-center leading-[25px]">取消</div>
      </div>
    </div>
  </div>
</div>
</body>
</html>
